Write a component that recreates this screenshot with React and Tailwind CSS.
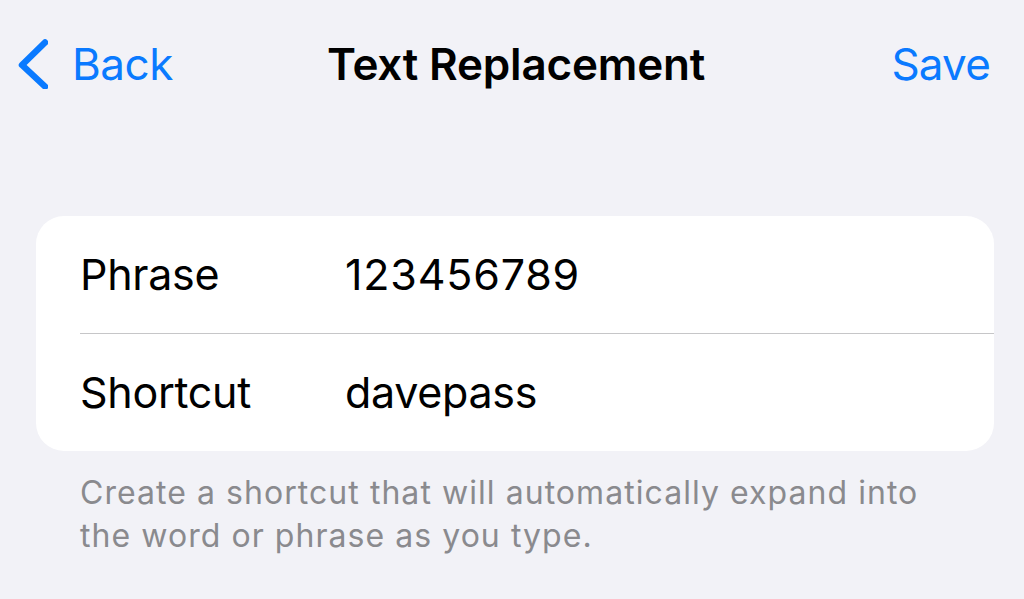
import React from 'react';

export default function App() {
  return (
    <div className="w-[1024px] h-[599px] bg-[#f2f2f7] overflow-hidden font-['Inter','Liberation_Sans',sans-serif]">
      {/* Nav bar */}
      <div className="relative h-[128px] flex items-start pt-[36px] px-[18px]">
        <button className="flex items-center gap-[24px] text-[#0a7aff]">
          <svg width="30" height="50" viewBox="0 0 30 50" fill="none">
            <path d="M27 3.5 L4 26 L27 47.5" stroke="#0a7aff" strokeWidth="6.5" strokeLinecap="round" strokeLinejoin="round" />
          </svg>
          <span className="text-[44px] leading-[56px] tracking-[-0.5px]">Back</span>
        </button>
        <h1 className="absolute left-0 right-0 top-[36px] text-center text-[44px] leading-[56px] font-semibold text-black tracking-[-0.2px]">
          <span className="relative left-[4px]">Text Replacement</span>
        </h1>
        <button className="ml-auto pr-[16px] text-[44px] leading-[56px] text-[#0a7aff] tracking-[-0.8px]">
          Save
        </button>
      </div>

      {/* Card */}
      <div className="mx-[36px] mt-[88px] w-[958px] bg-white rounded-[28px] overflow-hidden">
        <div className="flex items-center h-[117px] pl-[44px] text-black text-[43px] tracking-[-0.3px]">
          <span className="w-[265px]">Phrase</span>
          <span className="tracking-[0.8px]">123456789</span>
        </div>
        <div className="ml-[44px] h-px bg-[#c6c6c8]" />
        <div className="flex items-center h-[117px] pl-[44px] text-black text-[43px] tracking-[-0.3px]">
          <span className="w-[265px]">Shortcut</span>
          <span>davepass</span>
        </div>
      </div>

      {/* Footer */}
      <p className="mx-[80px] mt-[20px] w-[880px] text-[32px] leading-[43px] text-[#8a8a8e] tracking-[1.05px]">
        Create a shortcut that will automatically expand into the word or phrase as you type.
      </p>
    </div>
  );
}
